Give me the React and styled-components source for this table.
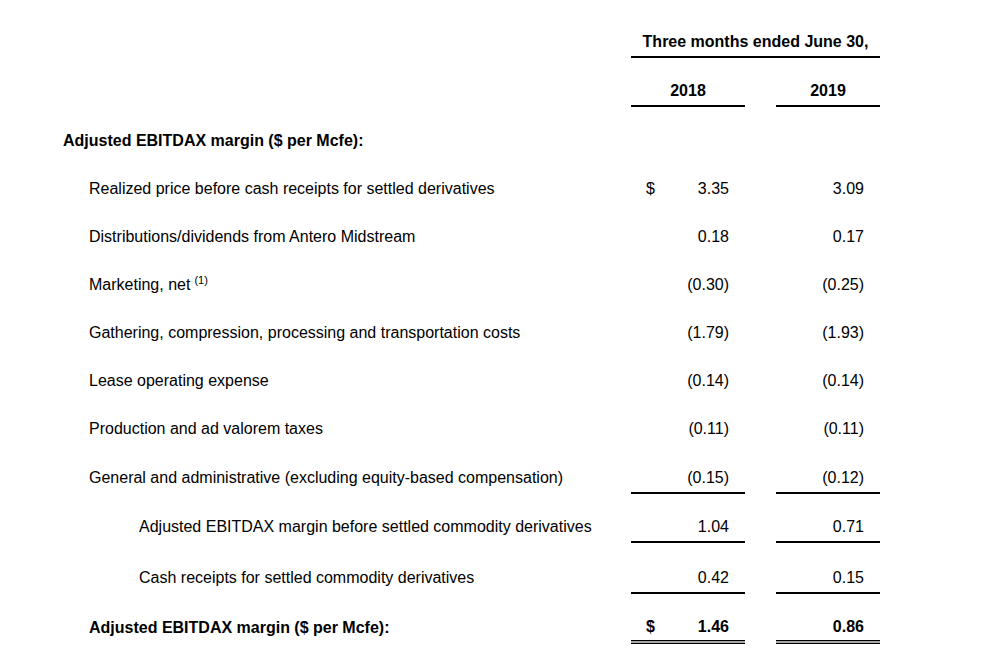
import React from "react";
import styled, { createGlobalStyle } from "styled-components";

const Global = createGlobalStyle`
  html, body { margin: 0; padding: 0; background: #fff; }
  body { font-family: "Liberation Sans", Arial, sans-serif; color: #000; }
`;

const Page = styled.div`
  width: 982px;
  height: 664px;
  overflow: hidden;
  padding-top: 27px;
  box-sizing: border-box;
  background: #fff;
`;

const Row = styled.div`
  display: grid;
  grid-template-columns: 631px 114px 31px 104px;
  height: ${(p) => p.$h}px;
  align-items: start;
  font-size: 16px;
  font-weight: ${(p) => (p.$bold ? 700 : 400)};
`;

const Label = styled.div`
  height: 29px;
  line-height: 29px;
  padding-left: ${(p) => p.$indent}px;
  white-space: nowrap;
`;

const Cell = styled.div`
  grid-column: ${(p) => p.$col};
  height: 29px;
  line-height: 29px;
  display: flex;
  align-items: center;
  justify-content: ${(p) => (p.$center ? "center" : "space-between")};
  padding: ${(p) => (p.$center ? "0" : "0 16px 0 15px")};
  border-bottom: ${(p) => (p.$line ? "2px solid #000" : "none")};
  white-space: nowrap;
`;

const DoubleCell = styled(Cell)`
  height: 27px;
  line-height: 27px;
  position: relative;
  border-bottom: 1px solid #000;
  &::after {
    content: "";
    position: absolute;
    left: 0;
    right: 0;
    bottom: -4px;
    height: 2px;
    background: #a6a6a6;
    border-bottom: 1px solid #000;
  }
`;

const Span2 = styled(Cell)`
  grid-column: 2 / 5;
`;

const Dollar = styled.span``;
const Num = styled.span`
  margin-left: auto;
`;

const Sup = styled.sup`
  font-size: 11px;
  vertical-align: 6px;
  line-height: 0;
  margin-left: 4px;
`;

const rows = [
  { label: "Realized price before cash receipts for settled derivatives", a: "3.35", b: "3.09", dollar: true, h: 48 },
  { label: "Distributions/dividends from Antero Midstream", a: "0.18", b: "0.17", h: 48 },
  { label: "Marketing, net", sup: "(1)", a: "(0.30)", b: "(0.25)", h: 48 },
  { label: "Gathering, compression, processing and transportation costs", a: "(1.79)", b: "(1.93)", h: 48 },
  { label: "Lease operating expense", a: "(0.14)", b: "(0.14)", h: 48 },
  { label: "Production and ad valorem taxes", a: "(0.11)", b: "(0.11)", h: 49 },
  { label: "General and administrative (excluding equity-based compensation)", a: "(0.15)", b: "(0.12)", line: true, h: 49 },
  { label: "Adjusted EBITDAX margin before settled commodity derivatives", a: "1.04", b: "0.71", line: true, indent: 139, h: 51 },
  { label: "Cash receipts for settled commodity derivatives", a: "0.42", b: "0.15", line: true, indent: 139, h: 50 },
];

export default function App() {
  return (
    <Page>
      <Global />
      <Row $h={49} $bold>
        <Label />
        <Span2 $center $line>Three months ended June 30,</Span2>
      </Row>
      <Row $h={50} $bold>
        <Label />
        <Cell $col={2} $center $line>2018</Cell>
        <Cell $col={4} $center $line>2019</Cell>
      </Row>
      <Row $h={48} $bold>
        <Label $indent={63}>Adjusted EBITDAX margin ($ per Mcfe):</Label>
      </Row>
      {rows.map((r) => (
        <Row key={r.label} $h={r.h}>
          <Label $indent={r.indent || 89}>
            {r.label}
            {r.sup && <Sup>{r.sup}</Sup>}
          </Label>
          <Cell $col={2} $line={r.line}>
            {r.dollar && <Dollar>$</Dollar>}
            <Num>{r.a}</Num>
          </Cell>
          <Cell $col={4} $line={r.line}>
            <Num>{r.b}</Num>
          </Cell>
        </Row>
      ))}
      <Row $h={40} $bold>
        <Label $indent={89}>Adjusted EBITDAX margin ($ per Mcfe):</Label>
        <DoubleCell $col={2}>
          <Dollar>$</Dollar>
          <Num>1.46</Num>
        </DoubleCell>
        <DoubleCell $col={4}>
          <Num>0.86</Num>
        </DoubleCell>
      </Row>
    </Page>
  );
}
